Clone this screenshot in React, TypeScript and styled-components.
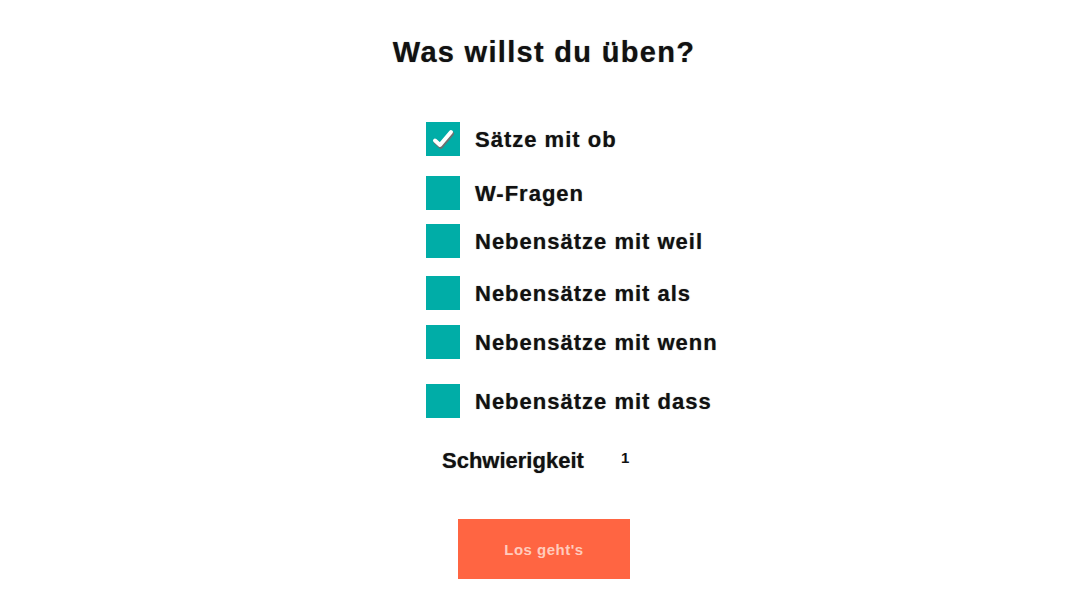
import React from "react";
import styled, { createGlobalStyle } from "styled-components";

const Global = createGlobalStyle`
  html, body { margin: 0; padding: 0; background: #fff; }
  body { font-family: "Liberation Sans", Arial, sans-serif; color: #111; }
`;

const Page = styled.div`
  display: flex;
  flex-direction: column;
  align-items: center;
  padding: 34px 0 0 10px;
`;

const Title = styled.h1`
  margin: 0;
  font-size: 29px;
  font-weight: 700;
  line-height: 36px;
  letter-spacing: 1.3px;
  text-shadow: 0 0 1px rgba(0,0,0,0.5);
`;

const List = styled.div`
  display: flex;
  flex-direction: column;
  width: 236px;
  margin-top: 52px;
`;

const Row = styled.label<{ $mt: number }>`
  display: flex;
  align-items: center;
  gap: 15px;
  margin-top: ${(p) => p.$mt}px;
  white-space: nowrap;
  cursor: pointer;
`;

const Box = styled.span`
  width: 34px;
  height: 34px;
  flex: none;
  background: #00ada7;
  display: flex;
  align-items: center;
  justify-content: center;
`;

const Label = styled.span`
  font-size: 22px;
  font-weight: 700;
  letter-spacing: 1px;
  line-height: 26px;
  padding-top: 2px;
  text-shadow: 0 0 1px rgba(0,0,0,0.5);
`;

const DiffRow = styled.div`
  display: flex;
  align-items: center;
  margin-top: 30px;
  padding-left: 16px;
  white-space: nowrap;
`;

const DiffLabel = styled.span`
  font-size: 22px;
  font-weight: 700;
  text-shadow: 0 0 1px rgba(0,0,0,0.5);
  width: 179px;
`;

const DiffValue = styled.span`
  font-size: 15px;
  font-weight: 700;
  margin-top: -7px;
`;

const Button = styled.button`
  margin-top: 45px;
  width: 172px;
  height: 60px;
  border: none;
  background: #ff6542;
  color: #ffcbbd;
  font-family: "Liberation Sans", Arial, sans-serif;
  font-size: 15px;
  font-weight: 700;
  letter-spacing: 0.5px;
  cursor: pointer;
`;

const Check = () => (
  <svg width="26" height="24" viewBox="0 0 26 24">
    <path d="M5 13.5 L10 18 L21 5" fill="none" stroke="#6f6f6f" strokeWidth="4.5" strokeLinecap="round" strokeLinejoin="round" transform="translate(0.8,1.6)" />
    <path d="M5 13.5 L10 18 L21 5" fill="none" stroke="#fff" strokeWidth="4" strokeLinecap="round" strokeLinejoin="round" />
  </svg>
);

const items = [
  { text: "Sätze mit ob", checked: true, mt: 0 },
  { text: "W-Fragen", checked: false, mt: 20 },
  { text: "Nebensätze mit weil", checked: false, mt: 14 },
  { text: "Nebensätze mit als", checked: false, mt: 18 },
  { text: "Nebensätze mit wenn", checked: false, mt: 15 },
  { text: "Nebensätze mit dass", checked: false, mt: 25 },
];

export default function App() {
  return (
    <>
      <Global />
      <Page>
        <Title>Was willst du üben?</Title>
        <List>
          {items.map((it) => (
            <Row key={it.text} $mt={it.mt}>
              <Box>{it.checked && <Check />}</Box>
              <Label>{it.text}</Label>
            </Row>
          ))}
          <DiffRow>
            <DiffLabel>Schwierigkeit</DiffLabel>
            <DiffValue>1</DiffValue>
          </DiffRow>
        </List>
        <Button>Los geht's</Button>
      </Page>
    </>
  );
}
